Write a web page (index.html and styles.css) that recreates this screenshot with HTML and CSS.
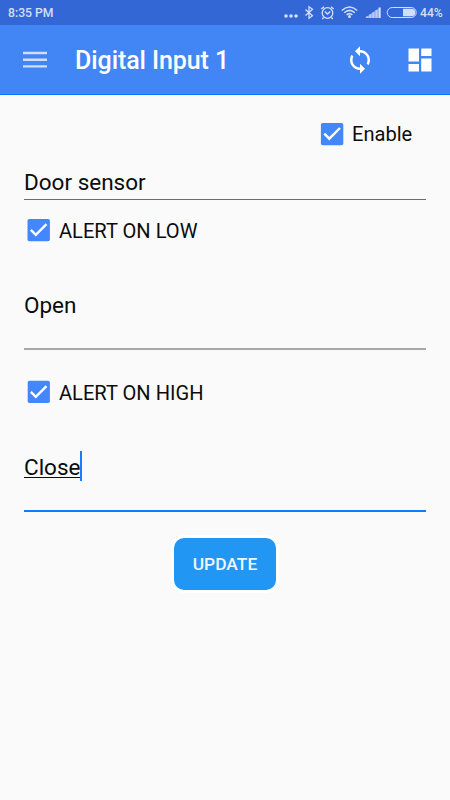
FILE: index.html
```html
<!DOCTYPE html>
<html lang="en">
<head>
<meta charset="utf-8">
<title>Digital Input 1</title>
<link rel="stylesheet" href="styles.css">
</head>
<body>
<div class="status">
  <span class="time">8:35 PM</span>
  <svg class="status-icons" width="150" height="25" viewBox="0 0 150 25" fill="none" stroke="#d3dff8">
    <g fill="#d3dff8" stroke="none"><circle cx="16" cy="16" r="1.8"/><circle cx="21" cy="16" r="1.8"/><circle cx="26" cy="16" r="1.8"/></g>
    <path stroke-width="1.3" d="M35.500 9.500 42.500 15.800 39 18.300V6.700L42.500 9.300 35.500 15.500"/>
    <circle cx="57.500" cy="13" r="5.300" stroke-width="1.300"/>
    <path stroke-width="1.400" d="M54.800 11.500 57.500 14 60.300 11.500M51.300 9 54 6.700M61 6.700 63.700 9M53.500 17.500 52.300 19M61.500 17.500 62.700 19"/>
    <path stroke-width="1.500" d="M71.800 10.500Q79.500 3.500 87.200 10.500M74.200 12.800Q79.500 8 84.800 12.800M76.600 14.900Q79.500 12.300 82.400 14.900"/>
    <circle cx="79.500" cy="16.600" r="1.500" fill="#d3dff8" stroke="none"/>
    <path fill="#8fabeb" stroke="none" d="M95 18 108.500 8.500V18Z"/>
    <path stroke="#b9cbf3" stroke-width="2" d="M97.300 18V16.300M100.300 18V14.200M103.300 18V12.200M106.500 18V10"/>
    <path stroke-width="2.200" d="M109.600 18V7.500"/>
    <rect x="117.200" y="7.500" width="29" height="10" rx="5" stroke-width="1"/>
    <path fill="#d3dff8" stroke="none" d="M133 8.700H141.500A3.800 3.800 0 0 1 141.500 16.300H133Z"/>
  </svg>
  <span class="battery">44%</span>
</div>
<header class="bar">
  <svg class="menu" width="24" height="18" viewBox="0 0 24 18"><path d="M0 2H24M0 8.700H24M0 15.400H24" stroke="#cfe0fc" stroke-width="2.400"/></svg>
  <h1>Digital Input 1</h1>
  <svg class="sync" width="30" height="30" viewBox="0 0 24 24"><path fill="#fff" d="M12 4V1L8 5l4 4V6c3.310 0 6 2.690 6 6 0 1.010-.25 1.970-.7 2.800l1.460 1.460C19.540 15.030 20 13.570 20 12c0-4.420-3.580-8-8-8zm0 14c-3.310 0-6-2.690-6-6 0-1.010.25-1.970.7-2.800L5.240 7.740C4.460 8.970 4 10.430 4 12c0 4.420 3.580 8 8 8v3l4-4-4-4v3z"/></svg>
  <svg class="board" width="24" height="24" viewBox="0 0 24 24"><path fill="#fff" d="M.5.5H11V13.500H.5zM.5 16H11V23.500H.5zM13.200.5H23.500V8H13.200zM13.200 10.500H23.500V23.500H13.200z"/></svg>
</header>
<main>
  <label class="check enable"><svg class="box" viewBox="0 0 24 24"><rect x=".9" y=".9" width="22.400" height="22.400" rx="1.800"/><path d="M4.300 11.700 9.300 16.700 20 6"/></svg><span>Enable</span></label>
  <div class="field name"><span>Door sensor</span></div>
  <label class="check low"><svg class="box" viewBox="0 0 24 24"><rect x=".5" y=".9" width="22.400" height="22.400" rx="1.800"/><path d="M3.800 11.900 8.800 16.900 19.500 6.200"/></svg><span>ALERT ON LOW</span></label>
  <div class="field open"><span>Open</span></div>
  <label class="check high"><svg class="box" viewBox="0 0 24 24"><rect x=".7" y=".8" width="22.200" height="22.200" rx="1.800"/><path d="M3.800 11.900 8.800 16.900 19.500 6.200"/></svg><span>ALERT ON HIGH</span></label>
  <div class="field close"><span class="typed">Close</span><i class="caret"></i></div>
  <button class="update">UPDATE</button>
</main>
</body>
</html>
```
FILE: styles.css
```css
* { box-sizing: border-box; }
body {
  margin: 0;
  height: 800px;
  background: #fafafa;
  color: #0c0c0c;
  font-family: Roboto, sans-serif;
}
svg { display: block; flex: none; }
.status {
  height: 25px;
  display: flex;
  align-items: center;
  padding: 0 8px;
  background: #3367d6;
  color: #d3dff8;
  font-size: 12.2px;
  font-weight: 500;
  white-space: nowrap;
}
.time { width: 262px; flex: none; }
.bar {
  height: 70px;
  display: flex;
  align-items: center;
  padding: 0 18px 0 23px;
  background: #4285f4;
  border-bottom: 1px solid #0878f8;
  color: #fff;
}
.bar h1 {
  margin: 0 0 0 28px;
  padding-top: 3px;
  flex: 1;
  font-size: 25px;
  letter-spacing: -0.08px;
  line-height: 30px;
  font-weight: 500;
}
.board { margin-left: 33px; }
main {
  display: flex;
  flex-direction: column;
  padding: 27px 24px 0;
}
.check {
  display: flex;
  align-items: center;
  height: 24px;
  gap: 8px;
  padding-left: 3px;
  font-size: 20.1px;
  line-height: 24px;
}
.low span, .high span { padding-top: 2px; }
.box { width: 24px; height: 24px; }
.box rect { fill: #4387fd; }
.box path { fill: none; stroke: #fff; stroke-width: 2.4; }
.enable { padding-left: 296px; }
.field {
  display: flex;
  align-items: flex-start;
  font-size: 22.5px;
  line-height: 30px;
  border-bottom: 1px solid #6c6c6c;
}
.name { margin-top: 21px; height: 33px; }
.low { margin-top: 18px; }
.open { margin-top: 48px; height: 60px; border-bottom: 2px solid #a8a8a8; }
.high { margin-top: 30px; }
.close { margin-top: 47px; height: 61px; border-bottom: 2px solid #0c7cff; }
.typed {
  padding-top: 1px;
  width: 56px;
  text-decoration: underline;
  text-decoration-thickness: 1px;
  text-underline-offset: 2px;
  text-decoration-skip-ink: none;
}
.caret { width: 2px; height: 30px; background: #1a7cff; }
.update {
  align-self: center;
  width: 102px;
  height: 52px;
  margin-top: 26px;
  padding: 0;
  border: 0;
  border-radius: 10px;
  background: #2196f3;
  box-shadow: 0 0 0 3px #fff;
  color: #eef7ff;
  font: 500 17.4px/52px Roboto, sans-serif;
}
```
